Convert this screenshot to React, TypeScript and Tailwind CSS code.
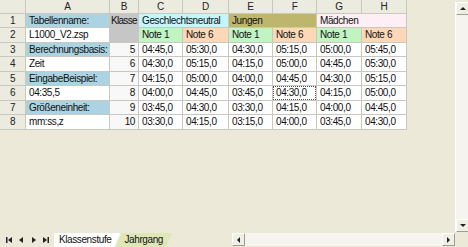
import React from "react";

const BLUE = "bg-[#abd3e1]";
const NOTE1 = "bg-[#c2f3c2]";
const NOTE6 = "bg-[#fcd8b8]";

type Row = {
  a: string;
  aBlue: boolean;
  b?: string;
  values: string[];
};

const rows: Row[] = [
  { a: "Berechnungsbasis:", aBlue: true, b: "5", values: ["04:45,0", "05:30,0", "04:30,0", "05:15,0", "05:00,0", "05:45,0"] },
  { a: "Zeit", aBlue: false, b: "6", values: ["04:30,0", "05:15,0", "04:15,0", "05:00,0", "04:45,0", "05:30,0"] },
  { a: "EingabeBeispiel:", aBlue: true, b: "7", values: ["04:15,0", "05:00,0", "04:00,0", "04:45,0", "04:30,0", "05:15,0"] },
  { a: "04:35,5", aBlue: false, b: "8", values: ["04:00,0", "04:45,0", "03:45,0", "04:30,0", "04:15,0", "05:00,0"] },
  { a: "Größeneinheit:", aBlue: true, b: "9", values: ["03:45,0", "04:30,0", "03:30,0", "04:15,0", "04:00,0", "04:45,0"] },
  { a: "mm:ss,z", aBlue: false, b: "10", values: ["03:30,0", "04:15,0", "03:15,0", "04:00,0", "03:45,0", "04:30,0"] },
];

function Head({ children }: { children?: React.ReactNode }) {
  return (
    <div className="bg-[#ecebdf] flex items-center justify-center text-[#222]">
      {children}
    </div>
  );
}

function Cell({
  children,
  className = "bg-white",
}: {
  children?: React.ReactNode;
  className?: string;
}) {
  return (
    <div className={`flex items-center px-[3px] whitespace-nowrap overflow-hidden ${className}`}>
      {children}
    </div>
  );
}

function Arrow({ dir }: { dir: "up" | "down" | "left" | "right" }) {
  const pts = {
    up: "1,5 4,2 7,5",
    down: "1,2 4,5 7,2",
    left: "5,1 2,4 5,7",
    right: "2,1 5,4 2,7",
  }[dir];
  return (
    <svg width="8" height="8" viewBox="0 0 8 8">
      <polygon points={pts} fill="#222" />
    </svg>
  );
}

function ScrollButton({ dir }: { dir: "up" | "down" | "left" | "right" }) {
  return (
    <div className="w-[13px] h-[13px] shrink-0 bg-[#f0efe6] border border-t-white border-l-white border-r-[#a09e90] border-b-[#a09e90] flex items-center justify-center">
      <Arrow dir={dir} />
    </div>
  );
}

function NavButton({ kind }: { kind: "first" | "prev" | "next" | "last" }) {
  return (
    <div className="w-[9px] h-[12px] flex items-center justify-center">
      <svg width="9" height="8" viewBox="0 0 9 8">
        {kind === "first" && (
          <>
            <rect x="1" y="1" width="1.5" height="6" fill="#222" />
            <polygon points="7,1 3,4 7,7" fill="#222" />
          </>
        )}
        {kind === "prev" && <polygon points="6,1 2,4 6,7" fill="#222" />}
        {kind === "next" && <polygon points="3,1 7,4 3,7" fill="#222" />}
        {kind === "last" && (
          <>
            <polygon points="2,1 6,4 2,7" fill="#222" />
            <rect x="6.5" y="1" width="1.5" height="6" fill="#222" />
          </>
        )}
      </svg>
    </div>
  );
}

export default function App() {
  return (
    <div className="w-[468px] h-[247px] bg-[#ece9d8] flex flex-col overflow-hidden text-[10px] tracking-[-0.4px] leading-none text-[#111] [font-family:'Liberation_Sans',Arial,sans-serif]">
      <div className="flex flex-1 min-h-0">
        <div className="flex-1">
          <div className="grid w-max bg-[#c9c8c0] gap-px pr-px pb-px grid-cols-[25px_83px_28px_43px_45px_43px_43px_44px_44px] grid-rows-[13px_13px_14px_13px_14px_13px_14px_13px_14px]">
            <Head />
            {["A", "B", "C", "D", "E", "F", "G", "H"].map((c) => (
              <Head key={c}>{c}</Head>
            ))}

            <Head>1</Head>
            <Cell className={BLUE}>Tabellenname:</Cell>
            <div className="row-span-2 bg-[#c6c6c6] flex items-start pt-[2px] pl-[1px] whitespace-nowrap tracking-[-0.7px]">Klasse</div>
            <Cell className="col-span-2 bg-[#c4f6fc]">Geschlechtsneutral</Cell>
            <Cell className="col-span-2 bg-[#bdb66c]">Jungen</Cell>
            <Cell className="col-span-2 bg-[#fdeff3]">Mädchen</Cell>

            <Head>2</Head>
            <Cell>L1000_V2.zsp</Cell>
            <Cell className={NOTE1}>Note 1</Cell>
            <Cell className={NOTE6}>Note 6</Cell>
            <Cell className={NOTE1}>Note 1</Cell>
            <Cell className={NOTE6}>Note 6</Cell>
            <Cell className={NOTE1}>Note 1</Cell>
            <Cell className={NOTE6}>Note 6</Cell>

            {rows.map((r, i) => (
              <React.Fragment key={i}>
                <Head>{i + 3}</Head>
                <Cell className={r.aBlue ? BLUE : "bg-white"}>{r.a}</Cell>
                <Cell className="bg-[#f8f8f8] justify-end">{r.b}</Cell>
                {r.values.map((v, j) => (
                  <Cell
                    key={j}
                    className={
                      i === 3 && j === 3
                        ? "bg-white outline outline-1 outline-dotted outline-[#555] -outline-offset-1"
                        : "bg-white"
                    }
                  >
                    {v}
                  </Cell>
                ))}
              </React.Fragment>
            ))}
          </div>
        </div>

        <div className="w-[13px] mt-[2px] flex flex-col bg-[#f5f4ee] border-l border-white">
          <ScrollButton dir="up" />
          <div className="flex-1" />
          <ScrollButton dir="down" />
        </div>
      </div>

      <div className="h-[15px] flex items-center">
        <div className="flex items-center pl-[5px] gap-[3px]">
          <NavButton kind="first" />
          <NavButton kind="prev" />
          <NavButton kind="next" />
          <NavButton kind="last" />
        </div>
        <div className="flex items-end h-full ml-[4px]">
          <div className="h-[14px] pl-[5px] pr-[9px] bg-white flex items-center [clip-path:polygon(0_0,100%_0,calc(100%-6px)_100%,0_100%)]">
            Klassenstufe
          </div>
          <div className="h-[14px] -ml-[5px] pl-[9px] pr-[9px] bg-[#dde8b6] flex items-center [clip-path:polygon(6px_0,100%_0,calc(100%-6px)_100%,0_100%)]">
            Jahrgang
          </div>
        </div>
        <div className="flex-1" />
        <div className="w-[223px] h-[13px] flex bg-[#f5f4ee]">
          <ScrollButton dir="left" />
          <div className="flex-1" />
          <ScrollButton dir="right" />
        </div>
        <div className="w-[13px]" />
      </div>
    </div>
  );
}
